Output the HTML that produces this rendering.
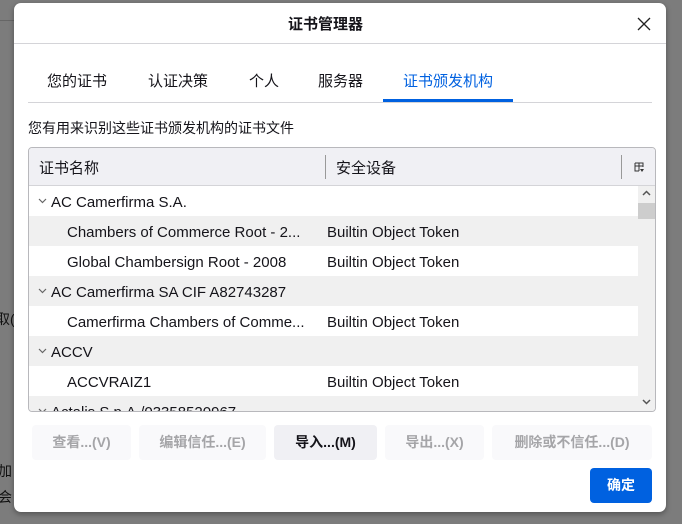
<!DOCTYPE html>
<html style="background:#7c7c7c"><head><meta charset="utf-8"><style>
*{margin:0;padding:0;box-sizing:border-box}
body{width:682px;height:524px;background:#7c7c7c;position:relative;overflow:hidden;font-family:"Liberation Sans","Noto Sans CJK SC",sans-serif;color:#15141a}
.abs{position:absolute}
.dlg{left:14px;top:3px;width:652px;height:509px;background:#fff;border-radius:7px;box-shadow:0 2px 6px rgba(0,0,0,.35)}
.t{font-size:14px;white-space:nowrap}
.row{position:absolute;left:0;width:609px;height:30px;font-size:15px;line-height:33px;white-space:nowrap}
.g{background:#f0f0f0}
.btn{position:absolute;top:425px;height:35px;border-radius:4px;background:#f9f9fb;color:#a5a5a8;font-size:14px;font-weight:bold;text-align:center;line-height:35px}
.chev{position:absolute;left:9px;top:12px}
</style></head><body>
<div class="abs" style="left:0;top:0;width:682px;height:524px;background:#7c7c7c"></div>
<div class="abs" style="left:0;top:20px;width:14px;height:1px;background:#666"></div>
<div class="abs t" style="left:-4px;top:309px;color:#111;font-size:14px">取(</div>
<div class="abs t" style="left:-2px;top:461px;color:#111">加</div>
<div class="abs t" style="left:-2px;top:487px;color:#111">会</div>
<div class="abs dlg"></div>
<div class="abs t" style="left:288px;top:13px;font-size:15px;font-weight:bold">证书管理器</div>
<svg class="abs" style="left:637px;top:17px" width="14" height="14"><path d="M1 1L13 13M13 1L1 13" stroke="#222" stroke-width="1.3"/></svg>
<div class="abs" style="left:14px;top:43px;width:652px;height:1px;background:#d4d4d8"></div>
<div class="abs t" style="left:47px;top:70px;font-size:15px">您的证书</div>
<div class="abs t" style="left:148px;top:70px;font-size:15px">认证决策</div>
<div class="abs t" style="left:249px;top:70px;font-size:15px">个人</div>
<div class="abs t" style="left:318px;top:70px;font-size:15px">服务器</div>
<div class="abs t" style="left:403px;top:70px;font-size:15px;color:#0061e0">证书颁发机构</div>
<div class="abs" style="left:28px;top:102px;width:624px;height:1px;background:#d4d4d8"></div>
<div class="abs" style="left:383px;top:99px;width:130px;height:3px;background:#0061e0"></div>
<div class="abs t" style="left:28px;top:118px">您有用来识别这些证书颁发机构的证书文件</div>
<div class="abs" style="left:28px;top:147px;width:628px;height:265px;border:1px solid #b8b8bc;border-radius:4px;overflow:hidden;background:#fff">
 <div class="abs" style="left:0;top:0;width:626px;height:38px;background:#f0f0f4;border-bottom:1px solid #d4d4d8"></div>
 <div class="abs t" style="left:10px;top:9px;font-size:15px">证书名称</div>
 <div class="abs" style="left:296px;top:7px;width:1px;height:24px;background:#999"></div>
 <div class="abs t" style="left:307px;top:9px;font-size:15px">安全设备</div>
 <div class="abs" style="left:592px;top:7px;width:1px;height:24px;background:#999"></div>
 <svg class="abs" style="left:605px;top:14px" width="11" height="11"><path d="M1 1H9V5M1 1V9H5M1 4H9M5 1V9" stroke="#333" fill="none"/><path d="M6 7H10L8 10Z" fill="#333"/></svg>
 <div style="position:absolute;left:0;top:38px;width:626px;height:227px">
  <div class="row" style="top:0"><svg class="chev" width="9" height="6"><path d="M1 1L4.5 4.5L8 1" stroke="#666" stroke-width="1.2" fill="none"/></svg><span class="abs" style="left:22px">AC Camerfirma S.A.</span></div>
  <div class="row g" style="top:30px"><span class="abs" style="left:38px">Chambers of Commerce Root - 2...</span><span class="abs" style="left:298px">Builtin Object Token</span></div>
  <div class="row" style="top:60px"><span class="abs" style="left:38px">Global Chambersign Root - 2008</span><span class="abs" style="left:298px">Builtin Object Token</span></div>
  <div class="row g" style="top:90px"><svg class="chev" width="9" height="6"><path d="M1 1L4.5 4.5L8 1" stroke="#666" stroke-width="1.2" fill="none"/></svg><span class="abs" style="left:22px">AC Camerfirma SA CIF A82743287</span></div>
  <div class="row" style="top:120px"><span class="abs" style="left:38px">Camerfirma Chambers of Comme...</span><span class="abs" style="left:298px">Builtin Object Token</span></div>
  <div class="row g" style="top:150px"><svg class="chev" width="9" height="6"><path d="M1 1L4.5 4.5L8 1" stroke="#666" stroke-width="1.2" fill="none"/></svg><span class="abs" style="left:22px">ACCV</span></div>
  <div class="row" style="top:180px"><span class="abs" style="left:38px">ACCVRAIZ1</span><span class="abs" style="left:298px">Builtin Object Token</span></div>
  <div class="row g" style="top:210px"><svg class="chev" width="9" height="6"><path d="M1 1L4.5 4.5L8 1" stroke="#666" stroke-width="1.2" fill="none"/></svg><span class="abs" style="left:22px">Actalis S.p.A./03358520967</span></div>
  <div class="abs" style="left:609px;top:0;width:17px;height:227px;background:#f0f0f0"></div>
  <div class="abs" style="left:609px;top:17px;width:17px;height:16px;background:#cdcdcd"></div>
  <svg class="abs" style="left:613px;top:4px" width="9" height="6"><path d="M1 5L4.5 1.5L8 5" stroke="#555" stroke-width="1.5" fill="none"/></svg>
  <svg class="abs" style="left:613px;top:213px" width="9" height="6"><path d="M1 1L4.5 4.5L8 1" stroke="#555" stroke-width="1.5" fill="none"/></svg>
 </div>
</div>
<div class="btn" style="left:32px;width:99px">查看...(V)</div>
<div class="btn" style="left:139px;width:127px">编辑信任...(E)</div>
<div class="btn" style="left:274px;width:103px;background:#f0f0f4;color:#15141a">导入...(M)</div>
<div class="btn" style="left:385px;width:99px">导出...(X)</div>
<div class="btn" style="left:492px;width:160px">删除或不信任...(D)</div>
<div class="abs" style="left:590px;top:468px;width:62px;height:35px;border-radius:4px;background:#0061e0;color:#fff;font-size:14px;font-weight:bold;text-align:center;line-height:35px">确定</div>
</body></html>
